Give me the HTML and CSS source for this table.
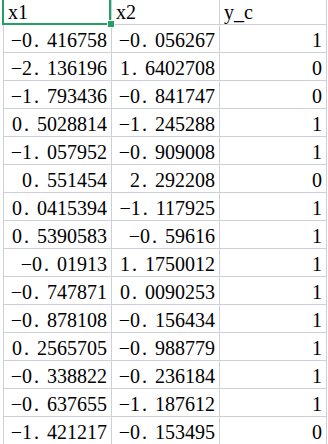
FILE: index.html
```html
<!DOCTYPE html>
<html>
<head>
<meta charset="utf-8">
<link rel="stylesheet" href="styles.css">
</head>
<body>
<div class="sheet">
  <div class="c h">x1</div><div class="c h">x2</div><div class="c h">y_c</div>
  <div class="c">−0<span class="p">.</span>416758</div><div class="c">−0<span class="p">.</span>056267</div><div class="c">1</div>
  <div class="c">−2<span class="p">.</span>136196</div><div class="c">1<span class="p">.</span>6402708</div><div class="c">0</div>
  <div class="c">−1<span class="p">.</span>793436</div><div class="c">−0<span class="p">.</span>841747</div><div class="c">0</div>
  <div class="c">0<span class="p">.</span>5028814</div><div class="c">−1<span class="p">.</span>245288</div><div class="c">1</div>
  <div class="c">−1<span class="p">.</span>057952</div><div class="c">−0<span class="p">.</span>909008</div><div class="c">1</div>
  <div class="c">0<span class="p">.</span>551454</div><div class="c">2<span class="p">.</span>292208</div><div class="c">0</div>
  <div class="c">0<span class="p">.</span>0415394</div><div class="c">−1<span class="p">.</span>117925</div><div class="c">1</div>
  <div class="c">0<span class="p">.</span>5390583</div><div class="c">−0<span class="p">.</span>59616</div><div class="c">1</div>
  <div class="c">−0<span class="p">.</span>01913</div><div class="c">1<span class="p">.</span>1750012</div><div class="c">1</div>
  <div class="c">−0<span class="p">.</span>747871</div><div class="c">0<span class="p">.</span>0090253</div><div class="c">1</div>
  <div class="c">−0<span class="p">.</span>878108</div><div class="c">−0<span class="p">.</span>156434</div><div class="c">1</div>
  <div class="c">0<span class="p">.</span>2565705</div><div class="c">−0<span class="p">.</span>988779</div><div class="c">1</div>
  <div class="c">−0<span class="p">.</span>338822</div><div class="c">−0<span class="p">.</span>236184</div><div class="c">1</div>
  <div class="c">−0<span class="p">.</span>637655</div><div class="c">−1<span class="p">.</span>187612</div><div class="c">1</div>
  <div class="c">−1<span class="p">.</span>421217</div><div class="c">−0<span class="p">.</span>153495</div><div class="c">0</div>
  <div class="sel"></div>
  <div class="handle"></div>
</div>
</body>
</html>
```
FILE: styles.css
```css
html, body {
  margin: 0;
  padding: 0;
  background: #ffffff;
  overflow: hidden;
}

.sheet {
  position: relative;
  margin-left: 3px;
  display: grid;
  grid-template-columns: 108px 108px 107px;
  width: max-content;
  border-left: 1px solid #cdd0da;
}

.c {
  box-sizing: border-box;
  height: 28px;
  border-right: 1px solid #cdd0da;
  border-bottom: 1px solid #cdd0da;
  padding: 5px 4px 0 4px;
  font-family: "Liberation Serif", "Times New Roman", serif;
  font-size: 20px;
  line-height: 20px;
  text-align: right;
  white-space: nowrap;
  color: #000000;
}

.h {
  height: 25px;
  padding-top: 2px;
  text-align: left;
}

.p {
  margin-left: 2px;
  letter-spacing: 8px;
}

.sel {
  position: absolute;
  left: -2px;
  top: -3px;
  width: 109px;
  height: 28px;
  box-sizing: border-box;
  border: 2px solid #23a064;
  pointer-events: none;
}

.handle {
  position: absolute;
  left: 104px;
  top: 21px;
  width: 6px;
  height: 6px;
  background: #23a064;
  box-shadow: 0 0 0 1px #ffffff;
}
```
